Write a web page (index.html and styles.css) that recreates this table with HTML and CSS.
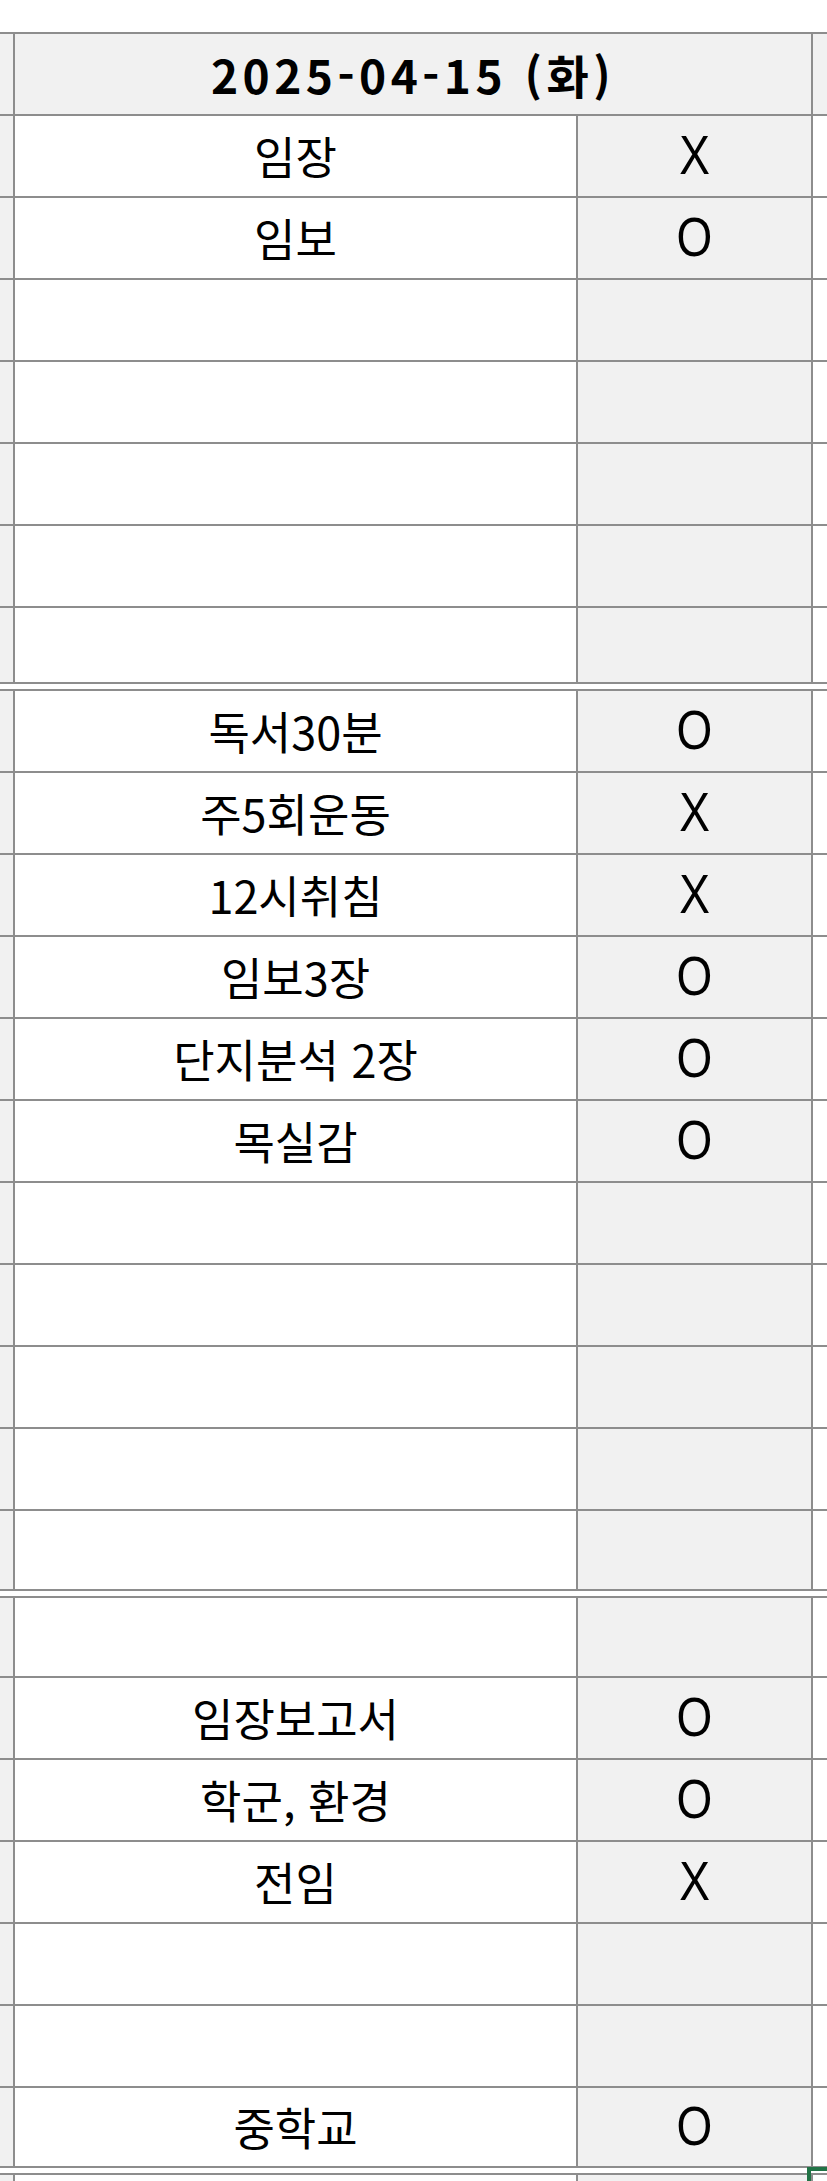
FILE: index.html
```html
<!DOCTYPE html>
<html lang="ko">
<head>
<meta charset="utf-8">
<title>2025-04-15 (화)</title>
<link rel="stylesheet" href="styles.css">
</head>
<body>
<div class="sheet">
  <div class="head">
    <div class="edge-l"></div>
    <div class="title">2025-04-15 (화)</div>
    <div class="edge-r"></div>
  </div>

  <div class="section s1">
    <div class="row"><div class="edge-l"></div><div class="label">임장</div><div class="value"><span class="mark">X</span></div><div class="edge-r"></div></div>
    <div class="row"><div class="edge-l"></div><div class="label">임보</div><div class="value"><span class="mark">O</span></div><div class="edge-r"></div></div>
    <div class="row"><div class="edge-l"></div><div class="label"></div><div class="value"></div><div class="edge-r"></div></div>
    <div class="row"><div class="edge-l"></div><div class="label"></div><div class="value"></div><div class="edge-r"></div></div>
    <div class="row"><div class="edge-l"></div><div class="label"></div><div class="value"></div><div class="edge-r"></div></div>
    <div class="row"><div class="edge-l"></div><div class="label"></div><div class="value"></div><div class="edge-r"></div></div>
    <div class="row last"><div class="edge-l"></div><div class="label"></div><div class="value"></div><div class="edge-r"></div></div>
  </div>
  <div class="divider"></div>

  <div class="section s2">
    <div class="row"><div class="edge-l"></div><div class="label">독서30분</div><div class="value"><span class="mark">O</span></div><div class="edge-r"></div></div>
    <div class="row"><div class="edge-l"></div><div class="label">주5회운동</div><div class="value"><span class="mark">X</span></div><div class="edge-r"></div></div>
    <div class="row"><div class="edge-l"></div><div class="label">12시취침</div><div class="value"><span class="mark">X</span></div><div class="edge-r"></div></div>
    <div class="row"><div class="edge-l"></div><div class="label">임보3장</div><div class="value"><span class="mark">O</span></div><div class="edge-r"></div></div>
    <div class="row"><div class="edge-l"></div><div class="label">단지분석 2장</div><div class="value"><span class="mark">O</span></div><div class="edge-r"></div></div>
    <div class="row"><div class="edge-l"></div><div class="label">목실감</div><div class="value"><span class="mark">O</span></div><div class="edge-r"></div></div>
    <div class="row"><div class="edge-l"></div><div class="label"></div><div class="value"></div><div class="edge-r"></div></div>
    <div class="row"><div class="edge-l"></div><div class="label"></div><div class="value"></div><div class="edge-r"></div></div>
    <div class="row"><div class="edge-l"></div><div class="label"></div><div class="value"></div><div class="edge-r"></div></div>
    <div class="row"><div class="edge-l"></div><div class="label"></div><div class="value"></div><div class="edge-r"></div></div>
    <div class="row last"><div class="edge-l"></div><div class="label"></div><div class="value"></div><div class="edge-r"></div></div>
  </div>
  <div class="divider"></div>

  <div class="section s3">
    <div class="row first"><div class="edge-l"></div><div class="label"></div><div class="value"></div><div class="edge-r"></div></div>
    <div class="row"><div class="edge-l"></div><div class="label">임장보고서</div><div class="value"><span class="mark">O</span></div><div class="edge-r"></div></div>
    <div class="row"><div class="edge-l"></div><div class="label">학군, 환경</div><div class="value"><span class="mark">O</span></div><div class="edge-r"></div></div>
    <div class="row"><div class="edge-l"></div><div class="label">전임</div><div class="value"><span class="mark">X</span></div><div class="edge-r"></div></div>
    <div class="row"><div class="edge-l"></div><div class="label"></div><div class="value"></div><div class="edge-r"></div></div>
    <div class="row"><div class="edge-l"></div><div class="label"></div><div class="value"></div><div class="edge-r"></div></div>
    <div class="row last"><div class="edge-l"></div><div class="label">중학교</div><div class="value"><span class="mark">O</span></div><div class="edge-r"></div></div>
  </div>
  <div class="divider bottom">
    <div class="selection"></div>
  </div>

  <div class="row tail"><div class="edge-l"></div><div class="label"></div><div class="value"></div><div class="edge-r"></div></div>
</div>
</body>
</html>
```

FILE: styles.css
```css
html, body {
  margin: 0;
  padding: 0;
  background: #ffffff;
}

body {
  font-family: "Noto Sans CJK KR", "Noto Sans", sans-serif;
  color: #000000;
  overflow: hidden;
}

.sheet {
  width: 827px;
  height: 2181px;
  padding-top: 32px;
  box-sizing: border-box;
  overflow: hidden;
}

.head {
  display: grid;
  grid-template-columns: 15px 798px 1fr;
  height: 84px;
  border-top: 2px solid #8d8d8d;
  border-bottom: 2px solid #8d8d8d;
  box-sizing: border-box;
  background: #f1f1f1;
}

.row {
  display: grid;
  grid-template-columns: 15px 563px 235px 1fr;
  height: 82px;
  border-bottom: 2px solid #8d8d8d;
  box-sizing: border-box;
}

.s1 .row.last {
  height: 74px;
  border-bottom: 0;
}

.s2 .row.last {
  height: 78px;
  border-bottom: 0;
}

.s3 .row.first {
  height: 80px;
}

.s3 .row.last {
  height: 78px;
  border-bottom: 0;
}

.row.tail {
  height: 40px;
  border-bottom: 0;
}

.edge-l {
  background: #f1f1f1;
  border-right: 2px solid #8d8d8d;
}

.edge-r {
  background: #ffffff;
}

.head .edge-r {
  background: #f1f1f1;
}

.title {
  display: flex;
  align-items: center;
  justify-content: center;
  border-right: 2px solid #8d8d8d;
  font-weight: 700;
  font-size: 46px;
  letter-spacing: 4.5px;
}

.label,
.value {
  display: flex;
  align-items: center;
  justify-content: center;
  border-right: 2px solid #8d8d8d;
}

.label {
  background: #ffffff;
  font-size: 45px;
  padding-bottom: 2px;
}

.value {
  background: #f1f1f1;
  font-family: "Liberation Sans", "Noto Sans", sans-serif;
  font-size: 46px;
  padding-bottom: 2px;
}

.mark {
  display: inline-block;
  transform: scaleY(1.2);
  line-height: 1;
}

.divider {
  position: relative;
  height: 9px;
  border-top: 2px solid #8d8d8d;
  border-bottom: 2px solid #8d8d8d;
  box-sizing: border-box;
  background: #ffffff;
}

.selection {
  position: absolute;
  left: 807px;
  top: -1px;
  width: 30px;
  height: 40px;
  border-top: 4px solid #217346;
  border-left: 4px solid #217346;
  box-sizing: border-box;
  z-index: 2;
}
```
